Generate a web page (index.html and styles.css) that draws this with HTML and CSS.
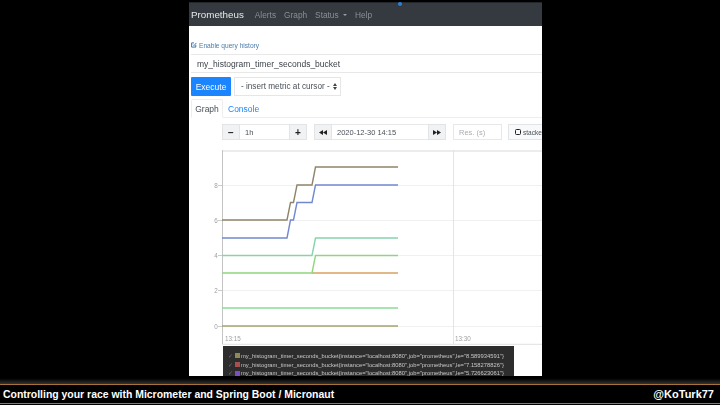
FILE: index.html
```html
<!DOCTYPE html>
<html lang="en">
<head>
<meta charset="utf-8">
<title>Controlling your race</title>
<link rel="stylesheet" href="styles.css">
</head>
<body>
<main class="stage">
  <section class="shot">
    <span class="rec-dot"></span>
    <nav class="nav">
      <span class="brand">Prometheus</span>
      <span class="nav-link">Alerts</span>
      <span class="nav-link">Graph</span>
      <span class="nav-link">Status <i class="caret"></i></span>
      <span class="nav-link">Help</span>
    </nav>
    <div class="history">
      <svg class="hist-icon" viewBox="0 0 10 10" width="6" height="6"><path d="M8 5v3.500H1v-7h4M3.500 4.500 5 6l4-4.500" fill="none" stroke="#2c6aa8" stroke-width="1.500"/></svg>
      <span>Enable query history</span>
    </div>
    <div class="query">my_histogram_timer_seconds_bucket</div>
    <div class="exec-row">
      <button class="execute">Execute</button>
      <div class="select"><span>- insert metric at cursor -</span><i class="updown"></i></div>
    </div>
    <div class="tabs">
      <span class="tab active">Graph</span>
      <span class="tab">Console</span>
    </div>
    <div class="controls">
      <div class="group">
        <span class="btn small">&minus;</span><span class="field range">1h</span><span class="btn small">+</span>
      </div>
      <div class="group">
        <span class="btn small"><svg viewBox="0 0 10 6" width="8" height="5"><path d="M5 0v6L0 3zM10 0v6L5 3z" fill="#222"/></svg></span><span class="field date">2020-12-30 14:15</span><span class="btn small"><svg viewBox="0 0 10 6" width="8" height="5"><path d="M0 0v6l5-3zM5 0v6l5-3z" fill="#222"/></svg></span>
      </div>
      <span class="field res">Res. (s)</span>
      <span class="stacked"><i class="box"></i>stacked</span>
    </div>
    <div class="chart">
      <svg class="plot" viewBox="0 0 353 195" width="353" height="195">
        <g fill="none" stroke="#f0f0f0">
          <path d="M33 35.500H353M33 70.500H353M33 105.500H353M33 140.500H353M33 176.500H353"/>
        </g>
        <path d="M33 1H353M33 194.500H353" fill="none" stroke="#e6e6e6" stroke-width="1.500"/>
        <path d="M264.500 0V194" fill="none" stroke="#e4e4e4"/>
        <path d="M33.500 0V194" fill="none" stroke="#c4c4c4"/>
        <path d="M29 35.500h4M29 70.500h4M29 105.500h4M29 140.500h4M29 176.500h4" stroke="#ccc"/>
        <g class="ticks">
          <text x="27" y="38" text-anchor="middle">8</text>
          <text x="27" y="73" text-anchor="middle">6</text>
          <text x="27" y="108" text-anchor="middle">4</text>
          <text x="27" y="143" text-anchor="middle">2</text>
          <text x="27" y="179" text-anchor="middle">0</text>
          <text x="36" y="191">13:15</text>
          <text x="266" y="191">13:30</text>
        </g>
        <g fill="none" stroke-width="1.400">
          <path stroke="#8e8468" d="M33 70H98L101.500 52.500H104.500L108 35H123L126.500 17H209"/>
          <path stroke="#7188cf" d="M33 88H98L101.500 70H104.500L108 52.500H123L126.500 35H209"/>
          <path stroke="#86d4ad" d="M33 105.500H123L126.500 88H209"/>
          <path stroke="#d9a05f" d="M123 123H209"/>
          <path stroke="#8fd67d" d="M33 123H123L126.500 105.500H209"/>
          <path stroke="#88dc96" d="M33 158H209"/>
          <path stroke="#a3a56b" d="M33 176H209"/>
        </g>
      </svg>
    </div>
    <div class="legend">
      <div class="legend-row"><i class="check">&#10003;</i><i class="swatch olive"></i>my_histogram_timer_seconds_bucket{instance="localhost:8080",job="prometheus",le="8.589934591"}</div>
      <div class="legend-row"><i class="check">&#10003;</i><i class="swatch red"></i>my_histogram_timer_seconds_bucket{instance="localhost:8080",job="prometheus",le="7.158278826"}</div>
      <div class="legend-row"><i class="check">&#10003;</i><i class="swatch violet"></i>my_histogram_timer_seconds_bucket{instance="localhost:8080",job="prometheus",le="5.726623061"}</div>
    </div>
  </section>
</main>
<footer class="footer">
  <span>Controlling your race with Micrometer and Spring Boot / Micronaut</span>
  <span class="handle">@KoTurk77</span>
</footer>
</body>
</html>
```
FILE: styles.css
```css
* { box-sizing: border-box; }
html, body { margin: 0; height: 405px; overflow: hidden; background: #000; }
body { font-family: "Liberation Sans", Arial, sans-serif; display: flex; flex-direction: column; }
.stage { height: 376px; padding: 2px 0 0 189px; background: #000; }
.shot { position: relative; width: 353px; height: 374px; background: #fff; overflow: hidden; filter: blur(0.35px); font-family: "Liberation Sans", sans-serif; }
.rec-dot { position: absolute; top: 0; left: 209px; width: 4px; height: 4px; border-radius: 50%; background: #2f7fd6; }
.nav { height: 24px; background: #343a40; border-top: 1px solid #23272b; display: flex; align-items: center; padding-left: 2px; gap: 8px; font-size: 8.300px; color: #8a8f94; }
.brand { font-size: 9.800px; color: #e6e8ea; margin-right: 3px; }
.caret { display: inline-block; border: 2px solid transparent; border-top-color: #9a9ea2; border-bottom: 0; margin: 0 0 2px 2px; }
.history { height: 28px; padding: 10px 0 0 2px; display: flex; gap: 2px; align-items: center; font-size: 6.600px; color: #4b7bab; }
.query { height: 19px; margin-left: 2px; padding: 0 6px; border-top: 1px solid #e8e8e8; border-bottom: 1px solid #e8e8e8; display: flex; align-items: center; font-size: 8.500px; color: #3d4349; }
.exec-row { display: flex; gap: 3px; margin: 4px 0 0 2px; height: 19px; }
.execute { width: 40px; height: 19px; padding: 0; border: 0; background: #1a85ff; color: #fff; font: 8.500px "Liberation Sans", sans-serif; border-radius: 1px; }
.select { width: 107px; border: 1px solid #e6e6e6; display: flex; align-items: center; justify-content: space-between; padding: 0 5px 0 6px; font-size: 8.200px; color: #495057; white-space: nowrap; }
.updown { width: 0; height: 7px; position: relative; }
.updown::before, .updown::after { content: ""; position: absolute; left: -2px; border: 2px solid transparent; }
.updown::before { top: 0; border-bottom: 3px solid #444; border-top: 0; }
.updown::after { bottom: 0; border-top: 3px solid #444; border-bottom: 0; }
.tabs { display: flex; height: 19px; margin: 3px 0 0 2px; border-bottom: 1px solid #eee; font-size: 8.500px; }
.tab { padding: 1px 5px 0; display: flex; align-items: center; color: #1a85ff; }
.tab.active { color: #495057; width: 32px; justify-content: center; padding: 0; border: 1px solid #eee; border-bottom: 1px solid #fff; margin-bottom: -1px; border-radius: 2px 2px 0 0; }
.controls { display: flex; height: 16px; margin: 6px 0 0 33px; gap: 7px; font-size: 7.500px; color: #495057; white-space: nowrap; }
.group { display: flex; flex: none; }
.btn { background: #f1f2f3; border: 1px solid #e2e4e6; display: flex; align-items: center; justify-content: center; color: #222; font-weight: 700; font-size: 10px; }
.btn.small { width: 18px; }
.field { border: 1px solid #e6e8ea; display: flex; align-items: center; padding: 0 5px; flex: none; }
.range { width: 49px; border-left: 0; border-right: 0; }
.date { width: 96px; border-left: 0; border-right: 0; }
.res { width: 49px; color: #a8adb2; }
.stacked { flex: none; width: 60px; border: 1px solid #e2e4e6; background: #f8f9fa; display: flex; align-items: center; gap: 2px; padding-left: 6px; font-size: 6.500px; margin-left: -1px; }
.box { width: 6px; height: 6px; border: 1.500px solid #222; border-radius: 1.500px; }
.chart { height: 195px; margin-top: 10px; }
.plot { display: block; }
.ticks text { font-size: 6.300px; fill: #a0a0a0; font-family: "Liberation Sans", sans-serif; }
.legend { position: absolute; left: 34px; top: 344px; width: 291px; height: 34px; background: #2d2d2d; padding: 5.500px 0 0 5px; font-size: 5.800px; color: #c8c8c8; font-family: "Liberation Sans", sans-serif; }
.legend-row { height: 8.700px; display: flex; align-items: center; white-space: nowrap; }
.check { font-style: normal; color: #6e6e6e; width: 7px; font-size: 5.500px; }
.swatch { width: 5px; height: 5px; margin-right: 1px; }
.olive { background: #8c8a55; }
.red { background: #a85050; }
.violet { background: #7a4fc4; }
.footer { display: flex; justify-content: space-between; align-items: center; padding: 0 6px 0 3px; color: #fff; font-weight: 700; font-size: 10.450px; position: relative; margin-top: 8px; border-top: 1px solid #a8733a; height: 20px; border-bottom: 1px solid #a8733a; background: #000; }
.footer::before { content: ""; position: absolute; left: 0; right: 0; top: -9px; height: 8px; background: linear-gradient(#000 30%, #333); }
.handle { font-size: 11px; }
```
